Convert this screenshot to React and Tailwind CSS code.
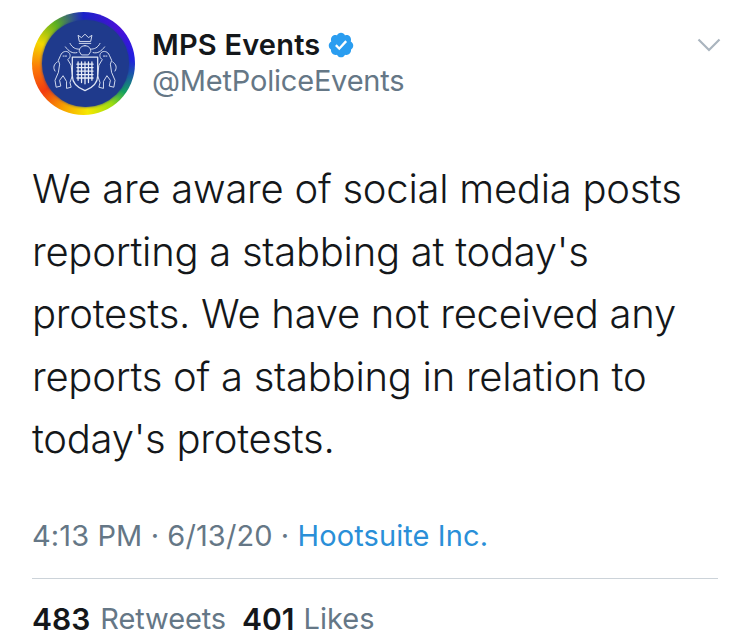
import React from 'react';

const tweetLines = [
  'We are aware of social media posts',
  'reporting a stabbing at today\'s',
  'protests. We have not received any',
  'reports of a stabbing in relation to',
  'today\'s protests.',
];

const Crest = () => (
  <svg viewBox="5 4 56 52" className="w-[66px] h-[60px]" fill="none" stroke="#dfe6f5" strokeWidth="0.8" strokeLinecap="round" strokeLinejoin="round">
    {/* crown */}
    <path d="M28 11l-1-5 3 2 3-3 3 3 3-2-1 5z" />
    <path d="M28 13h10" />
    {/* centre lion and mantling */}
    <path d="M33 15c-3 0-5 2-5 5l2 3h6l2-3c0-3-2-5-5-5z" />
    <path d="M26 21c-4 1-7-1-10-5M40 21c4 1 7-1 10-5" />
    <path d="M20 13c2 4 5 5 8 5M46 13c-2 4-5 5-8 5" />
    {/* left lion */}
    <path d="M12 23c1-3 5-4 7-2 2 2 1 5-1 6l3 5 1 9-2 6 1 4-4 1 0-6-3-5-3 4 1 5-4 1-1-6 3-7 1-7-1-3z" />
    <path d="M9 29c-3 2-4 5-2 8M14 24h1M16 24h1" />
    {/* right lion */}
    <path d="M54 23c-1-3-5-4-7-2-2 2-1 5 1 6l-3 5-1 9 2 6-1 4 4 1 0-6 3-5 3 4-1 5 4 1 1-6-3-7-1-7 1-3z" />
    <path d="M57 29c3 2 4 5 2 8M51 24h1M49 24h1" />
    {/* shield */}
    <path d="M22 25h22v16c0 7-6 11-11 13-5-2-11-6-11-13z" strokeWidth="1.1" />
    {/* portcullis */}
    <g stroke="#e8edf8" strokeWidth="1.1">
      <path d="M27 29v16M30 29v18M33 29v19M36 29v18M39 29v16" />
      <path d="M26 31h14M26 34h14M26 37h14M26 40h14M26 43h14" />
    </g>
  </svg>
);

const Avatar = () => (
  <div className="w-[103px] h-[103px] shrink-0 rounded-full pl-[3px] pb-[1px] flex items-center justify-center bg-[conic-gradient(from_0deg,#1a22c8_0deg,#4a10d8_45deg,#2020e0_85deg,#14a060_125deg,#9bdc10_145deg,#f6e800_175deg,#f8a000_205deg,#f23c10_235deg,#fb7a08_265deg,#f5d800_295deg,#5cb020_325deg,#1a22c8_360deg)]">
    <div className="w-[87px] h-[87px] rounded-full bg-[#1f3a8c] shadow-[0_0_3px_#1f3a8c] flex items-center justify-center">
      <Crest />
    </div>
  </div>
);

const VerifiedBadge = () => (
  <svg viewBox="0 0 24 24" className="w-[28px] h-[28px] shrink-0">
    <path
      fill="#2a9df0"
      d="M22.5 12.5c0-1.58-.875-2.95-2.148-3.6.154-.435.238-.905.238-1.4 0-2.21-1.71-3.998-3.818-3.998-.47 0-.92.084-1.336.25C14.818 2.415 13.51 1.5 12 1.5s-2.816.917-3.437 2.25c-.415-.165-.866-.25-1.336-.25-2.11 0-3.818 1.79-3.818 4 0 .494.083.964.237 1.4-1.272.65-2.147 2.018-2.147 3.6 0 1.495.782 2.798 1.942 3.486-.02.17-.032.34-.032.514 0 2.21 1.708 4 3.818 4 .47 0 .92-.086 1.335-.25.62 1.334 1.926 2.25 3.437 2.25 1.512 0 2.818-.916 3.437-2.25.415.163.865.248 1.336.248 2.11 0 3.818-1.79 3.818-4 0-.174-.012-.344-.033-.513 1.158-.687 1.943-1.99 1.943-3.484z"
    />
    <path fill="#fff" d="M10.54 16.5 6.9 12.86l1.4-1.4 2.2 2.2 5.2-5.66 1.47 1.35z" />
  </svg>
);

export default function App() {
  return (
    <div className="w-[750px] h-[636px] overflow-hidden bg-white text-[#14171a] font-['Inter','Liberation_Sans',sans-serif]">
      <div className="flex items-start pl-8 pr-6 pt-3">
        <Avatar />
        <div className="ml-[17px] pt-[15px] flex-1">
          <div className="flex items-center gap-[7px] h-[36px]">
            <span className="text-[29px] font-semibold tracking-[0.2px]">MPS Events</span>
            <VerifiedBadge />
          </div>
          <div className="text-[29px] leading-[36px] tracking-[-0.2px] text-[#657786]">@MetPoliceEvents</div>
        </div>
        <svg viewBox="0 0 24 14" className="w-[24px] h-[14px] mt-[26px] mr-[5px]" fill="none" stroke="#aab5bf" strokeWidth="2.2">
          <path d="M1.5 1.5 12 12 22.5 1.5" />
        </svg>
      </div>

      <div className="px-8 mt-[43px] text-[40px] leading-[62.5px] font-light tracking-[-0.26px] whitespace-nowrap">
        {tweetLines.map((line) => (
          <div key={line}>{line}</div>
        ))}
      </div>

      <div className="px-8 mt-[47px] text-[29px] leading-[36px] text-[#657786] whitespace-nowrap tracking-[0.1px]">
        4:13 PM · 6/13/20 · <span className="text-[#2a8fd8]">Hootsuite Inc.</span>
      </div>

      <div className="mx-8 mt-[24px] h-px bg-[#ccd3d9]" />

      <div className="px-8 mt-[22px] flex text-[29px] leading-[36px] text-[#657786] whitespace-nowrap">
        <span className="font-semibold text-[#14171a] text-[30px]">483</span>
        <span className="ml-[10px] tracking-[-0.1px]">Retweets</span>
        <span className="ml-[16px] font-semibold text-[#14171a] text-[30px]">401</span>
        <span className="ml-[9px]">Likes</span>
      </div>
    </div>
  );
}
